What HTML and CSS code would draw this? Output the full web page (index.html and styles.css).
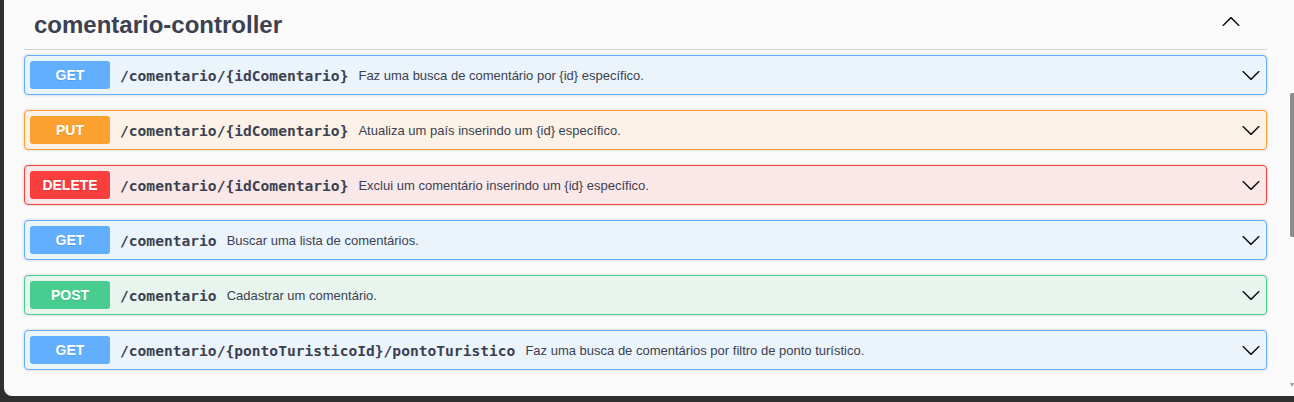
FILE: index.html
```html
<!DOCTYPE html>
<html lang="pt">
<head>
<meta charset="utf-8">
<title>comentario-controller</title>
<link rel="stylesheet" href="styles.css">
</head>
<body>
<div class="window">
  <div class="content">
    <div class="tag">
      <h3 class="tag-title">comentario-controller</h3>
      <svg class="tag-arrow" width="20" height="20" viewBox="0 0 20 20"><path d="M17.418 14.908c.272.268.709.268.979 0s.271-.701 0-.969l-7.908-7.83c-.27-.268-.707-.268-.979 0l-7.908 7.83c-.27.268-.27.701 0 .969.271.268.709.268.979 0L10 7.767l7.418 7.141z"/></svg>
    </div>
    <div class="ops">
      <div class="op op-get">
        <span class="method">GET</span>
        <span class="path">/comentario/{idComentario}</span>
        <span class="desc">Faz uma busca de comentário por {id} específico.</span>
        <svg class="op-arrow" width="20" height="20" viewBox="0 0 20 20"><path d="M17.418 6.109c.272-.268.709-.268.979 0s.271.701 0 .969l-7.908 7.83c-.27.268-.707.268-.979 0l-7.908-7.83c-.27-.268-.27-.701 0-.969.271-.268.709-.268.979 0L10 13.25l7.418-7.141z"/></svg>
      </div>
      <div class="op op-put">
        <span class="method">PUT</span>
        <span class="path">/comentario/{idComentario}</span>
        <span class="desc">Atualiza um país inserindo um {id} específico.</span>
        <svg class="op-arrow" width="20" height="20" viewBox="0 0 20 20"><path d="M17.418 6.109c.272-.268.709-.268.979 0s.271.701 0 .969l-7.908 7.83c-.27.268-.707.268-.979 0l-7.908-7.83c-.27-.268-.27-.701 0-.969.271-.268.709-.268.979 0L10 13.25l7.418-7.141z"/></svg>
      </div>
      <div class="op op-delete">
        <span class="method">DELETE</span>
        <span class="path">/comentario/{idComentario}</span>
        <span class="desc">Exclui um comentário inserindo um {id} específico.</span>
        <svg class="op-arrow" width="20" height="20" viewBox="0 0 20 20"><path d="M17.418 6.109c.272-.268.709-.268.979 0s.271.701 0 .969l-7.908 7.83c-.27.268-.707.268-.979 0l-7.908-7.83c-.27-.268-.27-.701 0-.969.271-.268.709-.268.979 0L10 13.25l7.418-7.141z"/></svg>
      </div>
      <div class="op op-get">
        <span class="method">GET</span>
        <span class="path">/comentario</span>
        <span class="desc">Buscar uma lista de comentários.</span>
        <svg class="op-arrow" width="20" height="20" viewBox="0 0 20 20"><path d="M17.418 6.109c.272-.268.709-.268.979 0s.271.701 0 .969l-7.908 7.83c-.27.268-.707.268-.979 0l-7.908-7.83c-.27-.268-.27-.701 0-.969.271-.268.709-.268.979 0L10 13.25l7.418-7.141z"/></svg>
      </div>
      <div class="op op-post">
        <span class="method">POST</span>
        <span class="path">/comentario</span>
        <span class="desc">Cadastrar um comentário.</span>
        <svg class="op-arrow" width="20" height="20" viewBox="0 0 20 20"><path d="M17.418 6.109c.272-.268.709-.268.979 0s.271.701 0 .969l-7.908 7.83c-.27.268-.707.268-.979 0l-7.908-7.83c-.27-.268-.27-.701 0-.969.271-.268.709-.268.979 0L10 13.25l7.418-7.141z"/></svg>
      </div>
      <div class="op op-get">
        <span class="method">GET</span>
        <span class="path">/comentario/{pontoTuristicoId}/pontoTuristico</span>
        <span class="desc">Faz uma busca de comentários por filtro de ponto turístico.</span>
        <svg class="op-arrow" width="20" height="20" viewBox="0 0 20 20"><path d="M17.418 6.109c.272-.268.709-.268.979 0s.271.701 0 .969l-7.908 7.83c-.27.268-.707.268-.979 0l-7.908-7.83c-.27-.268-.27-.701 0-.969.271-.268.709-.268.979 0L10 13.25l7.418-7.141z"/></svg>
      </div>
    </div>
  </div>
  <div class="scrollbar">
    <div class="thumb"></div>
    <div class="scroll-arrow"></div>
  </div>
</div>
</body>
</html>
```
FILE: styles.css
```css
html, body {
  margin: 0;
  padding: 0;
}
body {
  background: #2f2f2f;
  width: 1294px;
  height: 402px;
  overflow: hidden;
  font-family: "Liberation Sans", Arial, sans-serif;
  color: #3b4151;
}
.window {
  display: flex;
  margin-left: 4px;
  height: 396px;
  background: #fafafa;
  border-bottom-left-radius: 8px;
}
.content {
  flex: 1;
  padding: 0 19px 0 20px;
}
.tag {
  display: flex;
  align-items: flex-start;
  padding: 11px 0 10px 10px;
  border-bottom: 1px solid #d0d1d4;
}
.tag-title {
  flex: 1;
  margin: 0;
  font-size: 24px;
  line-height: 28px;
  font-weight: 700;
  color: #3b4151;
}
.tag-arrow {
  margin-right: 26px;
  fill: #111;
}
.ops {
  margin-top: 5px;
}
.op {
  display: flex;
  align-items: center;
  padding: 5px;
  border: 1px solid;
  border-radius: 4px;
  margin-bottom: 15px;
  box-shadow: 0 0 3px rgba(0, 0, 0, 0.19);
}
.method {
  width: 80px;
  padding: 6px 0;
  font-size: 14px;
  line-height: 16px;
  font-weight: 700;
  text-align: center;
  color: #fff;
  border-radius: 3px;
  text-shadow: 0 1px 0 rgba(0, 0, 0, 0.1);
}
.path {
  padding: 0 10px;
  font-family: "DejaVu Sans Mono", "Liberation Mono", monospace;
  font-size: 14.6px;
  font-weight: 700;
  color: #3b4151;
}
.desc {
  flex: 1;
  font-size: 13px;
  color: #3b4151;
}
.op-arrow {
  fill: #111;
}
.op-get {
  border-color: #61affe;
  background: #ebf3fb;
}
.op-get .method { background: #61affe; }
.op-put {
  border-color: #fca130;
  background: #fbf1e6;
}
.op-put .method { background: #fca130; }
.op-delete {
  border-color: #f93e3e;
  background: #fae7e7;
}
.op-delete .method { background: #f93e3e; }
.op-post {
  border-color: #49cc90;
  background: #e8f5ef;
}
.op-post .method { background: #49cc90; }
.scrollbar {
  width: 8px;
  display: flex;
  flex-direction: column;
  align-items: flex-end;
}
.thumb {
  margin-top: 93px;
  width: 4px;
  height: 144px;
  border-radius: 2px 0 0 2px;
  background: #8c8c8c;
}
.scroll-arrow {
  margin-top: auto;
  margin-bottom: 9px;
  width: 0;
  height: 0;
  border-left: 2px solid transparent;
  border-right: 2px solid transparent;
  border-top: 4px solid #9a9a9a;
}
```
